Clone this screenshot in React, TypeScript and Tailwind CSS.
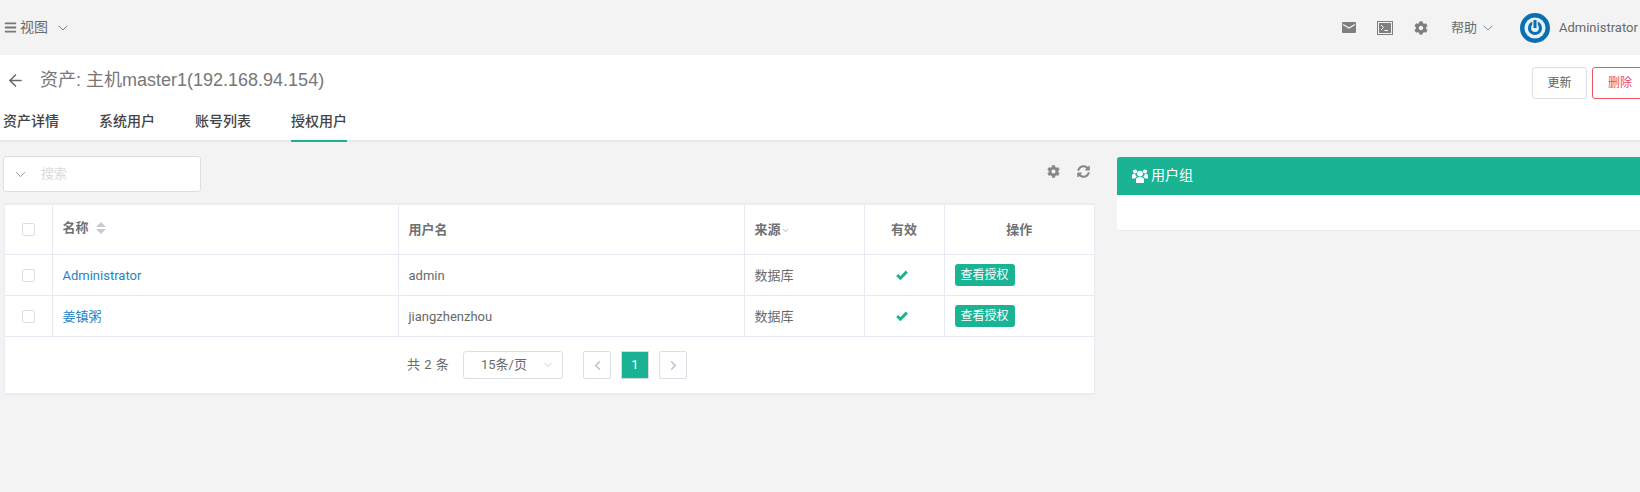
import React from "react";
import { FaBars, FaCog, FaSyncAlt } from "react-icons/fa";
import { LuChevronDown, LuChevronLeft, LuChevronRight, LuArrowLeft } from "react-icons/lu";

const font = { fontFamily: 'Roboto, "Noto Sans CJK SC", sans-serif' };

function Check() {
  return <span className="block w-[13px] h-[13px] mx-auto bg-white border border-[#dcdfe6] rounded-[2px]" />;
}

function Tick() {
  return (
    <svg width="12" height="10" viewBox="0 0 12 10" className="inline-block align-[-1px]">
      <path d="M1.2 5l3.2 3.2 6.4-6.6" fill="none" stroke="#1ab394" strokeWidth="3" />
    </svg>
  );
}

function Row({ name, user }: { name: string; user: string }) {
  return (
    <tr className="h-[41px] border-b border-[#e7eaf3]">
      <td className="border-r border-[#e7eaf3] pt-[2px]"><Check /></td>
      <td className="border-r border-[#e7eaf3] pl-[10px] pt-[2px] text-[#1c84c6]">{name}</td>
      <td className="border-r border-[#e7eaf3] pl-[10px] pt-[2px]">{user}</td>
      <td className="border-r border-[#e7eaf3] pl-[10px] pt-[2px]">数据库</td>
      <td className="border-r border-[#e7eaf3] text-center pr-[5px] pt-[1px]"><Tick /></td>
      <td className="pl-[10px]">
        <span className="inline-flex items-center justify-center w-[60px] h-[22px] bg-[#1ab394] rounded-[3px] text-white text-[12px]">查看授权</span>
      </td>
    </tr>
  );
}

export default function App() {
  return (
    <div className="w-[1640px] h-[492px] overflow-hidden bg-[#f3f3f4] text-[13px] text-[#676a6c]" style={font}>
      <header className="h-[55px] flex items-center justify-between pl-1 pr-1">
        <div className="flex items-center">
          <FaBars className="text-[13px] text-[#777]" />
          <span className="ml-[3px] text-[14px]">视图</span>
          <LuChevronDown className="ml-[7px] text-[16px] text-[#777]" strokeWidth={1.4} />
        </div>
        <div className="flex items-center">
          <svg width="14" height="11" viewBox="0 0 14 11">
            <rect width="14" height="11" rx="1" fill="#7f7f7f" />
            <path d="M1 2.5l6 3.5 6-3.5" fill="none" stroke="#f3f3f4" strokeWidth="1.3" />
          </svg>
          <svg width="16" height="14" viewBox="0 0 16 14" className="ml-[21px]">
            <rect x="0.5" y="0.5" width="15" height="13" fill="#7f7f7f" stroke="#7f7f7f" />
            <rect x="1.5" y="1.5" width="13" height="11" fill="none" stroke="#f3f3f4" />
            <path d="M4 4l2.5 2.5L4 9M7.5 9.5H11" fill="none" stroke="#fff" strokeWidth="1" />
          </svg>
          <FaCog className="ml-[21px] text-[14px] text-[#7f7f7f]" />
          <span className="ml-[23px]">帮助</span>
          <LuChevronDown className="ml-[3px] text-[16px] text-[#777]" strokeWidth={1.2} />
          <svg width="30" height="30" viewBox="0 0 30 30" className="ml-[24px]">
            <circle cx="15" cy="15" r="15" fill="#0a6fae" />
            <circle cx="15" cy="15" r="10.5" fill="#e8f1f6" />
            <circle cx="15" cy="15" r="5.5" fill="none" stroke="#0a6fae" strokeWidth="3.2" />
            <path d="M15 6v9" stroke="#e8f1f6" strokeWidth="5.5" />
            <path d="M15 7v8" stroke="#0a6fae" strokeWidth="3" />
          </svg>
          <span className="ml-[9px] w-[77px] whitespace-nowrap">Administrator</span>
        </div>
      </header>

      <section className="h-[87px] bg-white border-b-2 border-[#e7eaec] relative">
        <div className="h-[45px] flex items-center justify-between pl-[6px]">
          <div className="flex items-center mt-[5px]">
            <LuArrowLeft className="text-[19px] text-[#676a6c]" strokeWidth={2} />
            <h1 className="ml-[15px] mt-[1px] text-[18px] font-normal text-[#777]" style={{ fontFamily: '"Liberation Sans", "Noto Sans CJK SC", sans-serif' }}>资产: 主机master1(192.168.94.154)</h1>
          </div>
          <div className="flex gap-[5px] mt-[11px] -mr-[40px]">
            <button className="w-[55px] h-[32px] bg-white border border-[#dcdfe6] rounded-[3px] text-[12px] text-[#606266]">更新</button>
            <button className="w-[88px] h-[32px] bg-white border border-[#ed5565] rounded-[3px] text-[12px] text-[#f0476a] text-left pl-[15px]">删除</button>
          </div>
        </div>
        <nav className="flex gap-[40px] pl-[3px] h-[42px] font-medium text-[14px] text-[#444]">
          <a className="pt-[11px] h-[42px]">资产详情</a>
          <a className="pt-[11px] h-[42px]">系统用户</a>
          <a className="pt-[11px] h-[42px]">账号列表</a>
          <a className="pt-[11px] h-[42px] border-b-2 border-[#1ab394]">授权用户</a>
        </nav>
      </section>

      <main className="flex pt-[14px]">
        <div className="w-[1095px] ml-[3px] shrink-0">
          <div className="flex items-start justify-between h-[47px]">
            <div className="w-[198px] h-[36px] bg-white border border-[#dcdfe6] rounded-[3px] flex items-center pl-[8px]">
              <LuChevronDown className="text-[17px] text-[#999]" strokeWidth={1.4} />
              <span className="ml-[12px] text-[#d8dadd]">搜索</span>
            </div>
            <div className="flex items-center gap-[17px] mt-[9px] mr-[8px]">
              <FaCog className="text-[13px] text-[#888]" />
              <FaSyncAlt className="text-[13px] text-[#888]" />
            </div>
          </div>

          <div className="ml-[1px] w-[1091px] h-[192px] bg-white border-t-2 border-x border-b-2 border-[#e9ecf3]">
            <table className="w-full border-collapse table-fixed">
              <colgroup>
                <col className="w-[47px]" />
                <col className="w-[346px]" />
                <col className="w-[346px]" />
                <col className="w-[120px]" />
                <col className="w-[80px]" />
                <col />
              </colgroup>
              <thead>
                <tr className="h-[49px] border-b border-[#e7eaf3] text-[#6f7173]">
                  <th className="border-r border-[#e7eaf3] font-semibold"><Check /></th>
                  <th className="border-r border-[#e7eaf3] pl-[10px] text-left pb-[3px] font-semibold">
                    名称
                    <svg width="10" height="12" viewBox="0 0 10 12" className="inline-block ml-[7px] align-[-2px]">
                      <path d="M5 0l5 5H0z M5 12l5-5H0z" fill="#c7cad3" />
                    </svg>
                  </th>
                  <th className="border-r border-[#e7eaf3] pl-[10px] text-left font-semibold">用户名</th>
                  <th className="border-r border-[#e7eaf3] pl-[10px] text-left font-semibold">
                    来源<LuChevronDown className="inline-block text-[9px] text-[#999] align-[-1px]" />
                  </th>
                  <th className="border-r border-[#e7eaf3] text-center font-semibold">有效</th>
                  <th className="text-center font-semibold">操作</th>
                </tr>
              </thead>
              <tbody>
                <Row name="Administrator" user="admin" />
                <Row name="姜镇粥" user="jiangzhenzhou" />
              </tbody>
            </table>
            <div className="flex items-center h-[57px] pl-[402px]">
              <span className="w-[56px] whitespace-nowrap tracking-[0.5px]">共 2 条</span>
              <div className="w-[100px] h-[28px] border border-[#dcdfe6] rounded-[3px] flex items-center justify-between pl-[17px] pr-[8px]">
                <span>15条/页</span>
                <LuChevronDown className="text-[12px] text-[#c9ccd4]" />
              </div>
              <span className="ml-[20px] w-[28px] h-[28px] border border-[#dcdfe6] rounded-[2px] flex items-center justify-center text-[#b9bcc6]"><LuChevronLeft className="text-[15px]" /></span>
              <span className="ml-[10px] w-[28px] h-[28px] bg-[#1ab394] border border-[#d5dbe3] flex items-center justify-center text-white">1</span>
              <span className="ml-[10px] w-[28px] h-[28px] border border-[#dcdfe6] rounded-[2px] flex items-center justify-center text-[#b9bcc6]"><LuChevronRight className="text-[15px]" /></span>
            </div>
          </div>
        </div>

        <aside className="ml-[19px] w-[560px] shrink-0 mt-[1px]">
          <div className="h-[38px] bg-[#1ab394] rounded-t-[3px] flex items-center pl-[15px] text-white text-[14px]">
            <svg width="16" height="14" viewBox="0 0 16 14" fill="#fff">
              <circle cx="8" cy="4.6" r="2.9" />
              <circle cx="3" cy="2.6" r="2.1" />
              <circle cx="13" cy="2.6" r="2.1" />
              <path d="M4 14V10.5C4 8.8 5.2 7.9 8 7.9s4 .9 4 2.6V14z" />
              <path d="M0 9.5V6.6C0 5.4 1 5 3 5c.3 1.2 1 2 1.9 2.4C3.800 8 3.200 8.700 3.100 9.500z" />
              <path d="M16 9.5V6.600C16 5.400 15 5 13 5c-.3 1.200-1 2-1.900 2.400 1.100.6 1.700 1.300 1.800 2.100z" />
            </svg>
            <span className="ml-[3px] -mt-[1px]">用户组</span>
          </div>
          <div className="h-[36px] bg-white rounded-b-[3px] border-b border-[#e9ecf3]" />
        </aside>
      </main>
    </div>
  );
}
